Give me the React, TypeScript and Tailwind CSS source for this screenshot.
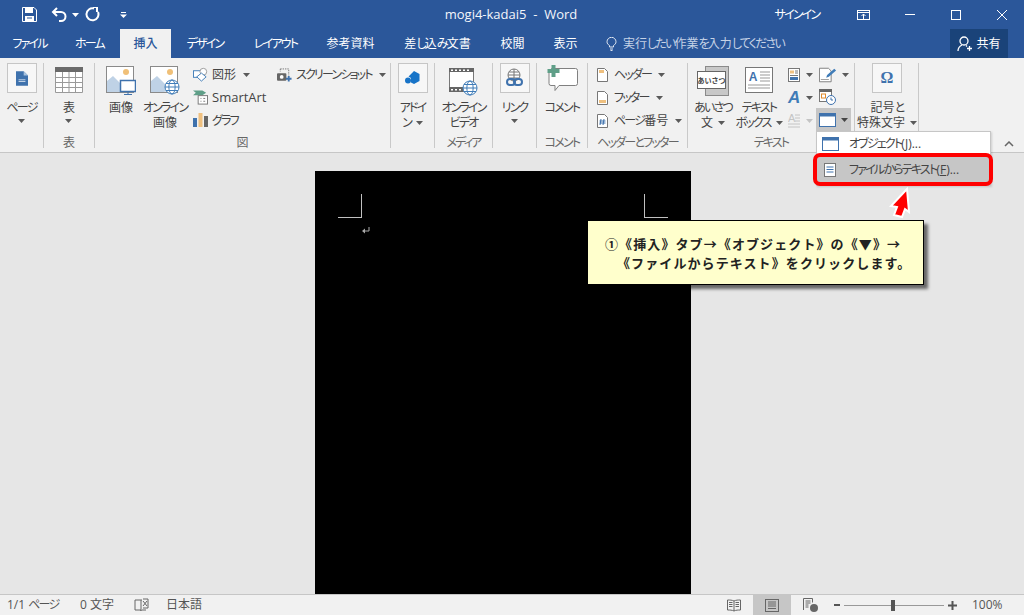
import React from "react";

const T = ({ s }: { s: string }) => (
  <>
    {s.split(/([\u3040-\u30FF]+)/).map((p, i) =>
      i % 2 === 1 ? <span key={i} className="tracking-[-1.8px] [font-feature-settings:'palt']">{p}</span> : <span key={i}>{p}</span>
    )}
  </>
);

const Caret = ({ c = "#5a5a5a" }: { c?: string }) => (
  <svg width="7" height="4" viewBox="0 0 7 4" className="shrink-0"><path d="M0 0h7L3.5 4z" fill={c} /></svg>
);

const Box = ({ children }: { children: React.ReactNode }) => (
  <div className="w-[30px] h-[30px] border border-[#c6c6c6] bg-[#f7f7f7] flex items-center justify-center">{children}</div>
);

const Large = ({ w, icon, lines, caret, inline }: { w: number | string; icon: React.ReactNode; lines: string[]; caret?: boolean; inline?: boolean }) => (
  <div className="flex flex-col items-center shrink-0" style={{ width: w }}>
    <div className="h-[30px] flex items-end justify-center">{icon}</div>
    <div className="mt-[7px] flex flex-col items-center leading-[15px] whitespace-nowrap">
      {lines.map((l, i) => (
        <div key={i} className="h-[15px] flex items-center gap-[5px]">
          <span><T s={l} /></span>
          {inline && i === lines.length - 1 && <Caret />}
        </div>
      ))}
      {caret && <div className="h-[12px] flex items-center"><Caret /></div>}
    </div>
  </div>
);

const Group = ({ w, label, children }: { w: number; label?: string; children: React.ReactNode }) => (
  <div className="h-[85px] flex flex-col shrink-0 border-r border-[#c9c9c9]" style={{ width: w }}>
    <div className="h-[72px] flex min-w-0">{children}</div>
    <div className="h-[13px] leading-[15px] text-center whitespace-nowrap text-[#666]">{label && <T s={label} />}</div>
  </div>
);

const SmallRow = ({ icon, text, caret, gap = 4, cls = "" }: { icon: React.ReactNode; text: string; caret?: boolean; gap?: number; cls?: string }) => (
  <div className="h-[23px] flex items-center whitespace-nowrap">
    <div className="w-[15px] flex justify-center shrink-0">{icon}</div>
    <span className={cls} style={{ marginLeft: gap }}><T s={text} /></span>
    {caret && <span className="ml-[7px]"><Caret /></span>}
  </div>
);

const Tab = ({ w, children, active }: { w: number; children: string; active?: boolean }) => (
  <div
    className={active ? "h-[29px] shrink-0 flex items-center justify-center bg-[#f1f1f1] text-[#2b579a] font-medium" : "h-[29px] shrink-0 flex items-center justify-center text-white"}
    style={{ width: w }}
  >
    <span><T s={children} /></span>
  </div>
);

const Pic = ({ badge }: { badge: React.ReactNode }) => (
  <svg className="-mb-[2px]" width="30" height="29" viewBox="0 0 30 29">
    <rect x="0.5" y="0.5" width="27" height="26" fill="#fff" stroke="#8a8a8a" />
    <circle cx="20" cy="6" r="3" fill="#f0c078" />
    <path d="M1 26V15l6-5 10 10v6z" fill="#bfd2e6" />
    <path d="M14 26l5-6 5 6z" fill="#d5e1ee" />
    {badge}
  </svg>
);

const Globe = ({ x, y, r }: { x: number; y: number; r: number }) => (
  <g fill="#fff" stroke="#3f7cb8" strokeWidth="1">
    <circle cx={x} cy={y} r={r} />
    <ellipse cx={x} cy={y} rx={r * 0.45} ry={r} fill="none" />
    <path d={`M${x - r} ${y}h${2 * r}M${x - r + 1} ${y - r * 0.5}h${2 * r - 2}M${x - r + 1} ${y + r * 0.5}h${2 * r - 2}`} fill="none" />
  </g>
);

const PageDoc = () => (
  <svg width="12" height="15" viewBox="0 0 14 17"><path d="M0 0h9l5 5v12H0z" fill="#3f72ad" /><path d="M9 0l5 5H9z" fill="#a9c3df" /><path d="M3 10h8M3 12h8" stroke="#d7e3f0" /></svg>
);

const TableIcon = () => (
  <svg width="28" height="26" viewBox="0 0 28 26">
    <rect x="0" y="0" width="28" height="5" fill="#6a6a6a" />
    <path d="M.5 5v20.5h27V5M.5 10.5h27M.5 15.5h27M.5 20.5h27M7.5 5v20M14 5v20M20.5 5v20" fill="#fff" stroke="#9a9a9a" />
  </svg>
);

const ShapesIcon = () => (
  <svg width="16" height="15" viewBox="0 0 16 15"><rect x="0.5" y="3.5" width="8" height="7" fill="#fff" stroke="#3f7cb8" /><circle cx="11" cy="4.5" r="3.6" fill="#fff" stroke="#9a9a9a" /><path d="M9 6l5 4-5 4.5-5-4.5z" fill="#fff" stroke="#3f7cb8" /></svg>
);
const SmartArtIcon = () => (
  <svg width="16" height="15" viewBox="0 0 16 15"><path d="M0 0h10l4 2.500-4 2.500H0l3-2.500z" fill="#5f9f88" /><rect x="5.500" y="5.500" width="10" height="9" fill="#fff" stroke="#777" /><path d="M8 8.500h1M11 8.500h2M8 11.500h1M11 11.500h2" stroke="#777" /></svg>
);
const ChartIcon = () => (
  <svg width="15" height="15" viewBox="0 0 15 15"><rect x="0" y="5" width="4" height="9" fill="#3f72ad" /><rect x="5.500" y="0" width="4" height="14" fill="#efc07f" /><rect x="11" y="3" width="4" height="11" fill="#666" /></svg>
);
const ScreenshotIcon = () => (
  <svg width="16" height="14" viewBox="0 0 16 14"><path d="M3.500.5h9v7" fill="none" stroke="#777" strokeDasharray="1.500 1" /><path d="M3.500.5v3" stroke="#777" strokeDasharray="1.500 1" /><rect x="0" y="5" width="10" height="8" rx="1" fill="#666" /><circle cx="5" cy="9" r="2" fill="#fff" /><path d="M12.500 8v6M9.500 11h6" stroke="#3f72ad" strokeWidth="2" /></svg>
);
const AddinIcon = () => (
  <svg width="15" height="14" viewBox="0 0 15 14"><path d="M9 0l5.500 3v7L9 13 6 11.500V7L3.500 5.500 9 0z" fill="#1874c8" /><circle cx="3" cy="9.500" r="3" fill="#1874c8" /></svg>
);
const VideoIcon = () => (
  <svg className="-mb-[3px]" width="30" height="28" viewBox="0 0 30 28">
    <rect x="0.5" y="0.5" width="24" height="23" fill="#fff" stroke="#777" />
    <path d="M0 0h25v4H0zM0 19h25v5H0z" fill="#666" />
    <path d="M2 1.500h2v1.500H2zM6 1.500h2v1.500H6zM10 1.500h2v1.500h-2zM14 1.500h2v1.500h-2zM18 1.500h2v1.500h-2zM2 21h2v1.500H2zM6 21h2v1.500H6zM10 21h2v1.500h-2z" fill="#fff" />
    <Globe x={21} y={20} r={7} />
  </svg>
);
const LinkIcon = () => (
  <svg width="18" height="20" viewBox="0 0 18 20">
    <circle cx="8" cy="7" r="6" fill="#fff" stroke="#777" />
    <path d="M2 7h12M3 4h10M3 10h10M8 1v12" stroke="#777" />
    <rect x="1" y="11" width="8" height="6" rx="3" fill="none" stroke="#3f72ad" strokeWidth="2" />
    <rect x="8" y="11" width="8" height="6" rx="3" fill="none" stroke="#3f72ad" strokeWidth="2" />
  </svg>
);
const CommentIcon = () => (
  <svg className="-mb-[1px]" width="31" height="29" viewBox="0 0 31 29">
    <path d="M4.500 3.500h24a2 2 0 0 1 2 2v13a2 2 0 0 1-2 2H12l-4 5v-5H4a2 2 0 0 1-2-2V6z" fill="#fff" stroke="#808080" />
    <path d="M4.500 0h4v4h4v4h-4v4h-4V8H.5V4h4z" fill="#5f9f88" />
  </svg>
);
const HeadIcon = ({ kind }: { kind: "h" | "f" | "n" }) => (
  <svg width="11" height="14" viewBox="0 0 11 14">
    <path d="M.5.500h7l3 3v10H.5z" fill="#fff" stroke="#777" />
    {kind === "h" && <rect x="2" y="2" width="5" height="3" fill="#efc07f" />}
    {kind === "f" && <rect x="2" y="9" width="7" height="3" fill="#efc07f" />}
    {kind === "n" && <path d="M4 5l-1 6M7 5l-1 6M2.500 7h6M2.500 9h6" stroke="#3f72ad" />}
  </svg>
);
const GreetIcon = () => (
  <svg className="-mb-[3px]" width="32" height="30" viewBox="0 0 32 30">
    <rect x="8.500" y="0.500" width="23" height="29" fill="#c8c8c8" stroke="#8a8a8a" />
    <rect x="0.500" y="5.500" width="28" height="17" fill="#fff" stroke="#666" />
    <text x="14.500" y="17" textAnchor="middle" fontSize="7" fontWeight="700" fill="#444">あいさつ</text>
  </svg>
);
const TextBoxIcon = () => (
  <svg width="28" height="26" viewBox="0 0 28 26">
    <rect x="0.500" y="0.500" width="27" height="25" fill="#fff" stroke="#777" />
    <text x="8" y="14" textAnchor="middle" fontSize="12" fontWeight="700" fill="#3f72ad" fontFamily="Liberation Sans">A</text>
    <path d="M15 5h10M15 8h10M15 11h10M15 14h10M3 18h22M3 21h22" stroke="#999" />
  </svg>
);
const QuickIcon = () => (
  <svg width="12" height="14" viewBox="0 0 12 14"><rect x=".5" y=".5" width="11" height="13" fill="#fff" stroke="#777" /><rect x="2" y="2.500" width="4" height="3" fill="#efc07f" /><path d="M7 3h3M7 5h3M2 7.500h8" stroke="#777" /><rect x="2" y="9" width="8" height="3" fill="#3f72ad" /></svg>
);
const WordArtIcon = () => (
  <span className="w-[12px] font-bold italic text-[17px] leading-[14px] text-[#3f7cb8] font-['Liberation_Sans',sans-serif]">A</span>
);
const DropCapIcon = () => (
  <svg width="12" height="15" viewBox="0 0 12 15"><text x="0" y="9" fontSize="11" fill="#c4c4c4" fontFamily="Liberation Sans">A</text><path d="M7 2h5M7 5h5M7 8h5M0 11h12M0 14h12" stroke="#c4c4c4" /></svg>
);
const SignIcon = () => (
  <svg width="18" height="16" viewBox="0 0 20 16"><path d="M.5 15.500V.5h10l3 3v12z" fill="#fff" stroke="#777" /><path d="M2 13h9" stroke="#999" /><path d="M8 11l1-3L17 1l2 2-8 7z" fill="#3f7cb8" /></svg>
);
const DateIcon = () => (
  <svg width="17" height="16" viewBox="0 0 17 16"><rect x=".5" y=".5" width="12" height="12" fill="#fff" stroke="#777" /><path d="M0 0h13v3H0z" fill="#666" /><rect x="2.500" y="5" width="4" height="4" fill="none" stroke="#e08a2c" /><circle cx="12" cy="11" r="4.500" fill="#fff" stroke="#3f72ad" /><path d="M12 8.500V11h2" fill="none" stroke="#3f72ad" /></svg>
);
const ObjectIcon = () => (
  <svg width="17" height="14" viewBox="0 0 17 14"><rect x=".5" y=".5" width="16" height="13" fill="#fff" stroke="#3f72ad" /><path d="M0 0h17v3.500H0z" fill="#3f72ad" /></svg>
);

export default function App() {
  return (
    <div className="relative w-[1024px] h-[615px] overflow-hidden flex flex-col bg-[#e6e6e6] text-[12px] text-[#444] font-['Open_Sans','Noto_Sans_CJK_JP',sans-serif]">
      {/* Title bar */}
      <div className="h-[29px] shrink-0 bg-[#2b579a] flex items-center text-white">
        <div className="w-[22px]" />
        <svg width="15" height="15" viewBox="0 0 15 15"><path d="M.5.500h11.500l2.500 2.500v11.500H.5z" fill="none" stroke="#fff" /><path d="M3 1h8v5H3zM3 9h9v5H3z" fill="#fff" /><path d="M5 11h5" stroke="#2b579a" /></svg>
        <svg className="ml-[14px]" width="16" height="15" viewBox="0 0 16 15"><path d="M6 1L2 5l4 4" fill="none" stroke="#fff" strokeWidth="2" /><path d="M2 5h8a4.500 4.500 0 0 1 0 9H8" fill="none" stroke="#fff" strokeWidth="2" /></svg>
        <span className="ml-[5px]"><Caret c="#fff" /></span>
        <svg className="ml-[6px]" width="15" height="15" viewBox="0 0 15 15"><path d="M9 1.500A6 6 0 1 0 13 5" fill="none" stroke="#fff" strokeWidth="2" /><path d="M8 0l4 0v5" fill="none" stroke="#fff" strokeWidth="2" /></svg>
        <svg className="ml-[20px]" width="7" height="6" viewBox="0 0 7 6"><path d="M1 0h5v1H1z" fill="#fff" /><path d="M0 2.500h7L3.500 6z" fill="#fff" /></svg>
        <div className="w-[316px]" />
        <span className="w-[136px] text-center whitespace-pre text-[13px] text-[#f4f6fa]">mogi4-kadai5  -  Word</span>
        <div className="w-[193px]" />
        <span className="w-[50px] text-center whitespace-nowrap"><T s="サインイン" /></span>
        <div className="w-[35px]" />
        <svg width="13" height="10" viewBox="0 0 13 10"><rect x=".5" y=".5" width="12" height="9" fill="none" stroke="#fff" /><path d="M0 2.500h13M6.500 9V4M4.500 6l2-2 2 2" fill="none" stroke="#fff" /></svg>
        <div className="w-[35px]" />
        <div className="w-[10px] h-px bg-white" />
        <div className="w-[36px]" />
        <div className="w-[10px] h-[10px] border border-white" />
        <div className="w-[36px]" />
        <svg width="10" height="10" viewBox="0 0 10 10"><path d="M0 0l10 10M10 0L0 10" stroke="#fff" /></svg>
      </div>

      {/* Tabs */}
      <div className="h-[29px] shrink-0 bg-[#2b579a] flex items-center">
        <Tab w={59}>ファイル</Tab>
        <Tab w={61}>ホーム</Tab>
        <Tab w={51} active>挿入</Tab>
        <Tab w={68}>デザイン</Tab>
        <Tab w={73}>レイアウト</Tab>
        <Tab w={77}>参考資料</Tab>
        <Tab w={97}>差し込み文書</Tab>
        <Tab w={53}>校閲</Tab>
        <Tab w={53}>表示</Tab>
        <svg className="ml-[14px]" width="11" height="14" viewBox="0 0 11 14"><path d="M3.500 10V8.500C2 7.500 1 6.500 1 4.800a4.500 4.500 0 0 1 9 0c0 1.700-1 2.700-2.500 3.700V10zM4 12h3M4.500 13.500h2" fill="none" stroke="#dfe6f1" /></svg>
        <span className="ml-[6px] text-[#c5d2e6] whitespace-nowrap"><T s="実行したい作業を入力してください" /></span>
        <div className="flex-1" />
        <div className="w-[58px] h-[29px] mr-[16px] bg-[#1a4379] flex items-center justify-center gap-[3px] text-white">
          <svg width="16" height="16" viewBox="0 0 16 16"><circle cx="7" cy="5" r="4" fill="none" stroke="#fff" strokeWidth="1.300" /><path d="M1 15c0-3 2-5 4-6M9 9.500l1 1" fill="none" stroke="#fff" strokeWidth="1.300" /><path d="M12.500 10v5M10 12.500h5" stroke="#fff" strokeWidth="1.300" /></svg>
          <span>共有</span>
        </div>
      </div>

      {/* Ribbon */}
      <div className="h-[95px] shrink-0 bg-[#f1f1f1] border-b border-[#c6c6c6] pt-[5px] flex relative">
        <Group w={44}>
          <Large w={43} icon={<Box><PageDoc /></Box>} lines={["ページ"]} caret />
        </Group>
        <Group w={51} label="表">
          <Large w={50} icon={<TableIcon />} lines={["表"]} caret />
        </Group>
        <Group w={296} label="図">
          <div className="w-[5px] shrink-0" />
          <Large w={42} icon={<Pic badge={<g><rect x="14.500" y="14.500" width="15" height="11" fill="#fff" stroke="#3f72ad" strokeWidth="1.500" /><path d="M22 26v2M18 28.500h8" stroke="#3f72ad" /></g>} />} lines={["画像"]} />
          <div className="w-[1px] shrink-0" />
          <Large w={44} icon={<Pic badge={<Globe x={22} y={21} r={7} />} />} lines={["オンライン", "画像"]} />
          <div className="w-[6px] shrink-0" />
          <div className="flex flex-col w-[84px] shrink-0">
            <SmallRow icon={<ShapesIcon />} text="図形" caret />
            <SmallRow icon={<SmartArtIcon />} text="SmartArt" cls="text-[13px]" />
            <SmallRow icon={<ChartIcon />} text="グラフ" />
          </div>
          <div className="flex flex-col shrink-0">
            <SmallRow icon={<ScreenshotIcon />} text="スクリーンショット" caret />
          </div>
        </Group>
        <Group w={44}>
          <Large w={43} icon={<Box><AddinIcon /></Box>} lines={["アドイ", "ン"]} inline />
        </Group>
        <Group w={58} label="メディア">
          <Large w={57} icon={<VideoIcon />} lines={["オンライン", "ビデオ"]} />
        </Group>
        <Group w={44}>
          <Large w={43} icon={<Box><LinkIcon /></Box>} lines={["リンク"]} caret />
        </Group>
        <Group w={51} label="コメント">
          <Large w={50} icon={<CommentIcon />} lines={["コメント"]} />
        </Group>
        <Group w={100} label="ヘッダーとフッター">
          <div className="w-[7px] shrink-0" />
          <div className="flex flex-col shrink-0">
            <SmallRow icon={<HeadIcon kind="h" />} text="ヘッダー" caret />
            <SmallRow icon={<HeadIcon kind="f" />} text="フッター" caret />
            <SmallRow icon={<HeadIcon kind="n" />} text="ページ番号" caret />
          </div>
        </Group>
        <Group w={167} label="テキスト">
          <div className="w-[4px] shrink-0" />
          <Large w={42} icon={<GreetIcon />} lines={["あいさつ", "文"]} inline />
          <div className="w-[3px] shrink-0" />
          <Large w={44} icon={<TextBoxIcon />} lines={["テキスト", "ボックス"]} inline />
          <div className="w-[7px] shrink-0" />
          <div className="flex flex-col w-[28px] shrink-0">
            <div className="h-[23px] flex items-center gap-[6px]"><QuickIcon /><Caret /></div>
            <div className="h-[23px] flex items-center gap-[6px]"><WordArtIcon /><Caret /></div>
            <div className="h-[23px] flex items-center gap-[6px]"><DropCapIcon /><Caret c="#c4c4c4" /></div>
          </div>
          <div className="flex flex-col shrink-0">
            <div className="h-[23px] flex items-center gap-[5px] pl-[3px]"><SignIcon /><Caret /></div>
            <div className="h-[23px] -mt-[1px] flex items-center pl-[3px]"><DateIcon /></div>
            <div className="h-[23px] w-[35px] bg-[#c6c6c6] flex items-center gap-[5px] pl-[3px]"><ObjectIcon /><Caret c="#444" /></div>
          </div>
        </Group>
        <Group w={64}>
          <div className="w-[1px] shrink-0" />
          <Large w={62} icon={<Box><span className="text-[#3f72ad] font-bold text-[16px] leading-none font-['Liberation_Serif',serif]">Ω</span></Box>} lines={["記号と", "特殊文字"]} inline />
        </Group>
        <div className="flex-1" />
        <svg className="absolute right-[10px] bottom-[5px]" width="10" height="6" viewBox="0 0 10 6"><path d="M1 5l4-4 4 4" fill="none" stroke="#666" strokeWidth="1.500" /></svg>
      </div>

      {/* Document */}
      <div className="flex-1 min-h-0 overflow-hidden flex justify-center pr-[18px] pt-[18px]">
        <div className="w-[376px] h-[423px] bg-black shrink-0 px-[23px] pt-[23px]">
          <div className="flex justify-between">
            <div className="w-[24px] h-[24px] border-r border-b border-[#c0c0c0]" />
            <div className="w-[24px] h-[24px] border-l border-b border-[#c0c0c0]" />
          </div>
          <svg className="ml-[24px] mt-[9px]" width="8" height="7" viewBox="0 0 8 7"><path d="M7 0v4H2" fill="none" stroke="#aaa" /><path d="M3 1.500L0 4l3 2.500z" fill="#aaa" /></svg>
        </div>
      </div>

      {/* Status bar */}
      <div className="h-[21px] shrink-0 bg-[#f1f1f1] border-t border-[#c6c6c6] flex items-center text-[#555]">
        <span className="ml-[7px] w-[73px] whitespace-nowrap"><T s="1/1 ページ" /></span>
        <span className="w-[54px] whitespace-nowrap">0 文字</span>
        <svg width="15" height="14" viewBox="0 0 15 14"><path d="M7 2H1v10h6v1M7 2v11M7 2h1M12 12H8" fill="none" stroke="#666" /><path d="M9 3l4 5M13 3L9 8" stroke="#666" /><path d="M9 1h5v9H9" fill="none" stroke="#666" /></svg>
        <span className="ml-[17px] whitespace-nowrap">日本語</span>
        <div className="flex-1" />
        <svg width="14" height="13" viewBox="0 0 14 13"><path d="M7 2C5 1 3 1 .5 1v10c2.500 0 4.500 0 6.500 1 2-1 4-1 6.500-1V1C11 1 9 1 7 2zM7 2v10M2 3.500h3.500M2 5.500h3.500M2 7.500h3.500M8.500 3.500H12M8.500 5.500H12M8.500 7.500H12" fill="none" stroke="#666" /></svg>
        <div className="ml-[12px] w-[38px] h-[20px] bg-[#c6c6c6] flex items-center justify-center">
          <svg width="14" height="13" viewBox="0 0 14 13"><rect x=".5" y=".5" width="13" height="12" fill="none" stroke="#666" /><path d="M3 3h8M3 5h8M3 7h8M3 9.500h8" stroke="#666" /></svg>
        </div>
        <svg className="ml-[12px]" width="15" height="14" viewBox="0 0 15 14"><path d="M.5 12V.5h9v4M2.500 3h5M2.500 5h5M2.500 7h3M2.500 9h3" fill="none" stroke="#666" /><circle cx="11" cy="10" r="4" fill="#666" /></svg>
        <div className="ml-[16px] w-[6px] h-[2px] bg-[#555]" />
        <div className="ml-[4px] w-[100px] h-px bg-[#999] relative">
          <div className="absolute left-[47px] -top-[5px] w-[4px] h-[11px] bg-[#555]" />
        </div>
        <svg className="ml-[4px]" width="9" height="9" viewBox="0 0 9 9"><path d="M4.500 0v9M0 4.500h9" stroke="#555" strokeWidth="2" /></svg>
        <span className="ml-[15px] mr-[20px] w-[32px] whitespace-nowrap">100%</span>
      </div>

      {/* Dropdown menu */}
      <div className="absolute left-[816px] top-[131px] w-[175px] bg-white border border-[#c6c6c6] shadow-[1px_1px_2px_rgba(0,0,0,0.15)]">
        <div className="h-[23px] flex items-center pl-[5px] whitespace-nowrap">
          <ObjectIcon />
          <span className="ml-[10px]"><T s="オブジェクト" />(<u>J</u>)...</span>
        </div>
        <div className="h-[30px] flex items-center pl-[7px] bg-[#c6c6c6] whitespace-nowrap">
          <svg width="12" height="14" viewBox="0 0 12 14"><rect x=".5" y=".5" width="11" height="13" fill="#fff" stroke="#777" /><path d="M2.500 4h7M2.500 6.500h7M2.500 9h7" stroke="#3f72ad" /></svg>
          <span className="ml-[13px]"><T s="ファイルからテキスト" />(<u>F</u>)...</span>
        </div>
      </div>
      <div className="absolute left-[813px] top-[153px] w-[180px] h-[33px] border-[4px] border-[#ff0000] rounded-[7px]" />

      {/* Arrow */}
      <svg className="absolute left-[886px] top-[186px]" width="26" height="34" viewBox="0 0 26 34">
        <path d="M21 3L5 20l6 1-3 8 8 2 3-8 4 3z" fill="#ff0000" stroke="#fff" strokeWidth="2" strokeLinejoin="miter" />
      </svg>

      {/* Callout */}
      <div className="absolute left-[587px] top-[220px] w-[337px] h-[65px] bg-[#ffffcc] border border-black shadow-[4px_4px_3px_rgba(0,0,0,0.55)] pl-[17px] pt-[13px] font-bold text-[#222] text-[13px] leading-[19px] tracking-[1.1px] whitespace-nowrap font-['Noto_Sans_CJK_JP',sans-serif]">
        <div>①《挿入》タブ→《オブジェクト》の《▼》→</div>
        <div className="pl-[12px]">《ファイルからテキスト》をクリックします。</div>
      </div>
    </div>
  );
}
